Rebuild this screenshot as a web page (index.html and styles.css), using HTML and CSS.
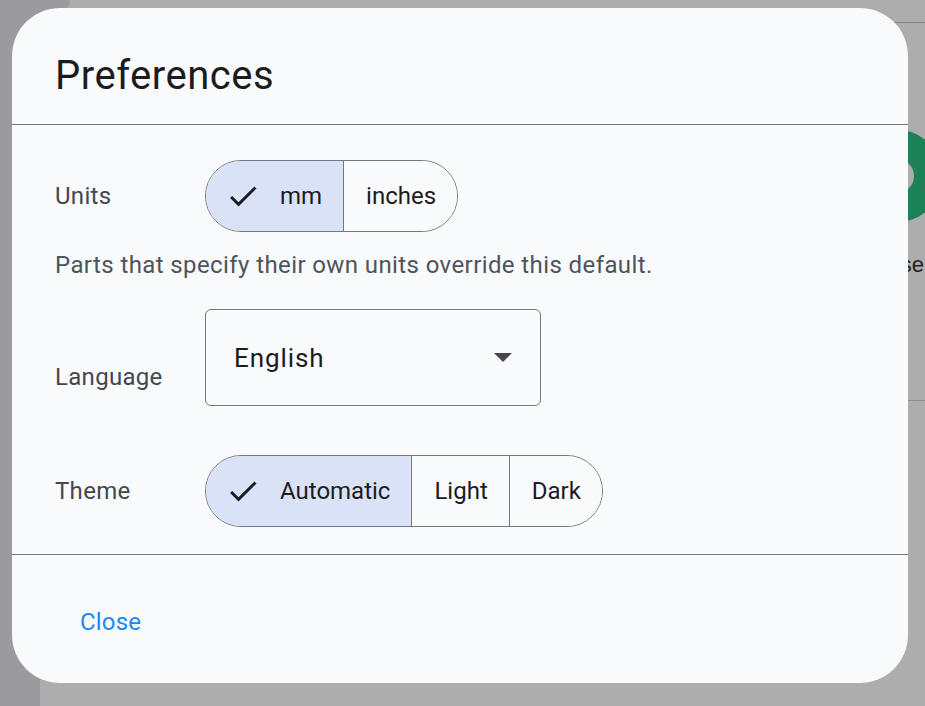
FILE: index.html
```html
<!DOCTYPE html>
<html lang="en">
<head>
    <meta charset="UTF-8">
    <meta name="viewport" content="width=device-width, initial-scale=1.0">
    <title>Preferences</title>
    <link rel="stylesheet" href="styles.css">
</head>
<body>
    <div class="page">
        <aside class="sidebar"></aside>
        <main class="content">
            <div class="topline"></div>
            <div class="ring"></div>
            <p class="peek">Close</p>
            <div class="midline"></div>
        </main>
    </div>

    <div class="scrim"></div>

    <section class="dialog">
        <header class="dialog-head">
            <h1>Preferences</h1>
        </header>

        <div class="dialog-body">
            <div class="row">
                <span class="label">Units</span>
                <div class="segmented">
                    <button class="seg selected">
                        <svg class="check" viewBox="0 0 24 24"><path d="M9 16.2 4.8 12l-1.4 1.4L9 19 21 7l-1.4-1.4z"/></svg>
                        mm
                    </button>
                    <button class="seg">inches</button>
                </div>
            </div>
            <p class="hint">Parts that specify their own units override this default.</p>

            <div class="row row-language">
                <span class="label">Language</span>
                <div class="select">
                    <span>English</span>
                    <span class="arrow"></span>
                </div>
            </div>

            <div class="row row-theme">
                <span class="label">Theme</span>
                <div class="segmented">
                    <button class="seg selected">
                        <svg class="check" viewBox="0 0 24 24"><path d="M9 16.2 4.8 12l-1.4 1.4L9 19 21 7l-1.4-1.4z"/></svg>
                        Automatic
                    </button>
                    <button class="seg">Light</button>
                    <button class="seg">Dark</button>
                </div>
            </div>
        </div>

        <footer class="dialog-foot">
            <button class="text-btn">Close</button>
        </footer>
    </section>
</body>
</html>
```

FILE: styles.css
```css
body {
    margin: 0;
    font-family: 'Roboto', 'Liberation Sans', sans-serif;
    background-color: #adadad;
    overflow: hidden;
}

.page {
    display: flex;
    height: 706px;
}

.sidebar {
    width: 40px;
    background-color: #9b9b9f;
}

.content {
    flex: 1;
    position: relative;
    overflow: hidden;
}

.topline {
    margin-top: 22px;
    height: 1px;
    background-color: #83848f;
}

.ring {
    position: absolute;
    left: 811px;
    top: 130px;
    width: 34px;
    height: 34px;
    border: 29px solid #1e8259;
    border-radius: 50%;
}

.peek {
    position: absolute;
    right: 1px;
    top: 252px;
    margin: 0;
    font-family: 'Liberation Sans', sans-serif;
    font-size: 22px;
    color: #1f2228;
}

.midline {
    position: absolute;
    left: 0;
    right: 0;
    top: 400px;
    height: 1px;
    background-color: #8e8f96;
}

.scrim {
    position: absolute;
    left: 0;
    top: 0;
    width: 70px;
    height: 22px;
    background-color: #9b9b9f;
    border-bottom-right-radius: 40px 22px;
}

/* dialog */

.dialog {
    position: absolute;
    left: 12px;
    top: 8px;
    width: 896px;
    height: 675px;
    background-color: #f9fafc;
    border-radius: 48px;
    display: flex;
    flex-direction: column;
    color: #1a1c1e;
}

.dialog-head {
    height: 116px;
    border-bottom: 1px solid #74777f;
    padding: 0 43px;
}

.dialog-head h1 {
    margin: 0;
    padding-top: 44px;
    font-size: 40px;
    font-weight: 400;
    line-height: 48px;
    letter-spacing: 0.5px;
    color: #1a1c1e;
}

.dialog-body {
    padding: 35px 43px 0;
    height: 394px;
    border-bottom: 1px solid #74777f;
}

.row {
    display: flex;
    align-items: center;
}

.label {
    width: 150px;
    font-size: 24px;
    color: #44474e;
    letter-spacing: 0.3px;
}

.row-language {
    margin-top: 30px;
    align-items: flex-end;
}

.row-language .label {
    padding-bottom: 15px;
}

.row-theme {
    margin-top: 49px;
}

.hint {
    margin: 19px 0 0;
    font-size: 24px;
    line-height: 28px;
    color: #4f535b;
    letter-spacing: 0.4px;
}

.segmented {
    display: flex;
    height: 72px;
    border: 1px solid #74777f;
    border-radius: 36px;
    overflow: hidden;
    box-sizing: border-box;
}

.seg {
    display: flex;
    align-items: center;
    gap: 22px;
    padding: 0 21px 0 22px;
    border: none;
    border-left: 1px solid #74777f;
    background: #f9fafc;
    font-family: inherit;
    font-size: 24px;
    font-weight: 400;
    color: #1a1c1e;
}

.seg:first-child {
    border-left: none;
}

.seg.selected {
    background-color: #dae2f7;
}

.check {
    width: 36px;
    height: 36px;
    margin: 0 -3px;
    fill: #1a1c1e;
}

.select {
    display: flex;
    align-items: center;
    justify-content: space-between;
    box-sizing: border-box;
    width: 336px;
    height: 97px;
    padding: 0 28px;
    border: 1px solid #74777f;
    border-radius: 6px;
    font-size: 26px;
    letter-spacing: 0.9px;
    color: #1a1c1e;
}

.arrow {
    width: 0;
    height: 0;
    border-left: 9px solid transparent;
    border-right: 9px solid transparent;
    border-top: 9px solid #44474e;
}

.dialog-foot {
    padding: 47px 43px 0;
}

.text-btn {
    border: none;
    background: none;
    padding: 6px 25px;
    font-family: inherit;
    font-size: 24px;
    font-weight: 400;
    color: #1e88f0;
    letter-spacing: 0.2px;
}
```
